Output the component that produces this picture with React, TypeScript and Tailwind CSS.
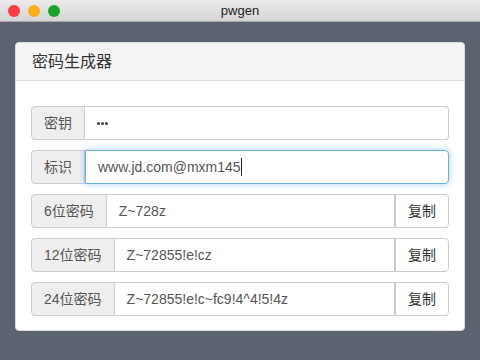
import React from "react";

const font = { fontFamily: '"Liberation Sans", "Noto Sans CJK SC", sans-serif' };

function Row({ label, children, copy, focused }: { label: string; children: React.ReactNode; copy?: boolean; focused?: boolean }) {
  return (
    <div className="flex h-[34px]">
      <div className="flex items-center px-3 bg-[#eeeeee] border border-[#cccccc] rounded-l-[4px] text-[14px] text-[#555555] shrink-0">
        {label}
      </div>
      <div
        className={
          "flex-1 flex items-center px-3 text-[14px] text-[#555555] bg-white border " +
          (focused
            ? "border-[#66afe9] shadow-[0_0_6px_rgba(102,175,233,0.6)] rounded-r-[4px]"
            : copy
            ? "border-[#cccccc] border-l-0"
            : "border-[#cccccc] border-l-0 rounded-r-[4px]")
        }
      >
        {children}
      </div>
      {copy && (
        <div className="flex items-center px-3 bg-white border border-[#cccccc] rounded-r-[4px] text-[14px] text-[#333333] shrink-0">
          复制
        </div>
      )}
    </div>
  );
}

export default function App() {
  return (
    <div className="w-[480px] h-[360px] flex flex-col bg-[#5c6370] overflow-hidden" style={font}>
      <div className="h-[22px] shrink-0 relative flex items-center justify-center bg-gradient-to-b from-[#ebebeb] to-[#d5d5d5] border-b border-[#a8a8a8]">
        <div className="absolute left-[8px] top-[5px] flex gap-[8px]">
          <div className="w-[12px] h-[12px] rounded-full bg-[#fc3a44]" />
          <div className="w-[12px] h-[12px] rounded-full bg-[#fdac1c]" />
          <div className="w-[12px] h-[12px] rounded-full bg-[#1ca228]" />
        </div>
        <span className="text-[13px] text-[#222222]">pwgen</span>
      </div>
      <div className="px-[15px] pt-[20px]">
        <div className="bg-white rounded-[4px] border border-[#dddddd] overflow-hidden">
          <div className="h-[38px] flex items-center px-[16px] bg-[#f5f5f5] border-b border-[#dddddd] text-[16px] text-[#333333]">
            密码生成器
          </div>
          <div className="px-[15px] pt-[25px] pb-[14px] flex flex-col gap-[10px]">
            <Row label="密钥">
              <span className="flex gap-[1px]">
                <span className="w-[3px] h-[3px] rounded-full bg-[#444444]" />
                <span className="w-[3px] h-[3px] rounded-full bg-[#444444]" />
                <span className="w-[3px] h-[3px] rounded-full bg-[#444444]" />
              </span>
            </Row>
            <Row label="标识" focused>
              <span>www.jd.com@mxm145</span>
              <span className="w-[1px] h-[18px] bg-[#222222]" />
            </Row>
            <Row label="6位密码" copy>
              Z~728z
            </Row>
            <Row label="12位密码" copy>
              Z~72855!e!cz
            </Row>
            <Row label="24位密码" copy>
              Z~72855!e!c~fc9!4^4!5!4z
            </Row>
          </div>
        </div>
      </div>
    </div>
  );
}
